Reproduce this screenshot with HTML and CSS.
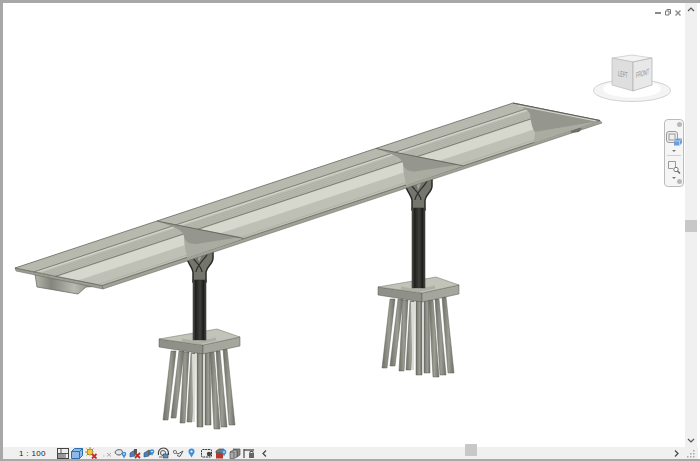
FILE: index.html
```html
<!DOCTYPE html>
<html lang="en">
<head>
<meta charset="utf-8">
<title>Bridge view</title>
<link rel="stylesheet" href="styles.css">
</head>
<body>
<div class="window">
  <div class="main">
    <div class="canvas">
      <svg class="scene" viewBox="3 3 682 444" width="682" height="444" aria-label="Bridge model">
        <defs>
          <linearGradient id="col" x1="0" x2="1" y1="0" y2="0">
            <stop offset="0" stop-color="#55564f"/><stop offset=".2" stop-color="#1f201e"/>
            <stop offset=".55" stop-color="#3f403c"/><stop offset=".8" stop-color="#1c1d1b"/><stop offset="1" stop-color="#4a4b46"/>
          </linearGradient>
          <linearGradient id="pile" x1="0" x2="1" y1="0" y2="0">
            <stop offset="0" stop-color="#6e6f66"/><stop offset=".55" stop-color="#9c9d93"/><stop offset="1" stop-color="#6e6f66"/>
          </linearGradient>
          <linearGradient id="box" x1="0" x2="1" y1="0" y2="0">
            <stop offset="0" stop-color="#b3b4aa"/><stop offset=".25" stop-color="#84857c"/><stop offset=".6" stop-color="#b9bab0"/><stop offset="1" stop-color="#77786f"/>
          </linearGradient>
          <g id="head">
            <path d="M185 252C186 262 192 266 193 272V282H206V272C207 266 213 264 213 258V248Z" fill="#74756d" stroke="#2a2b28" stroke-width="1.500"/>
            <path d="M190 253C192 260 201 264 202 272M209 251C206 259 197 264 196 272" fill="none" stroke="#2f302d" stroke-width="1.200"/>
            <path d="M197 254L199 262L203 253Z" fill="#a3a49a"/>
          </g>
          <g id="found">
            <g fill="url(#pile)" stroke="#5f605a" stroke-width=".5">
              <path d="M171 351L176 351L168 420L163 420Z"/>
              <path d="M179 351L184 351L176 418L171 418Z"/>
              <path d="M184 352L189 352L185 423L180 423Z"/>
              <path d="M191 353L195 353L192 422L187 422Z"/>
              <path d="M197 352L203 352L203 427L197 427Z"/>
              <path d="M205 352L210 352L211 425L205 425Z"/>
              <path d="M210 352L214 352L220 429L214 429Z"/>
              <path d="M216 351L220 351L227 427L221 427Z"/>
              <path d="M223 349L227 349L235 425L229 425Z"/>
            </g>
            <path d="M192 354L196 354L195 422L193 422Z" fill="#dcdcd6"/>
            <path d="M159 339V347L203 354V345Z" fill="#8f9087" stroke="#55564f" stroke-width=".5"/>
            <path d="M240 337V346L203 354V345Z" fill="#a5a69c" stroke="#55564f" stroke-width=".5"/>
            <path d="M159 339L217 329L240 337L203 345Z" fill="#c2c3b9" stroke="#6d6e67" stroke-width=".5"/>
            <path d="M182 340L198 343L216 339" fill="none" stroke="#a6a79d" stroke-width="3" opacity=".7"/>
          </g>
          <g id="patch">
            <path d="M157 221C170 226 182 228 184 236C184 245 186 250 187 258L244 238.500Z" fill="#aaaba1"/>
            <path d="M157 221C170 226 182 228 184 236C185 241 188 244 196 244L241 237Z" fill="#95968d"/>
            <path d="M157 221L244 238.500" stroke="#5f605a" stroke-width=".8" fill="none"/>
          </g>
        </defs>

        <path d="M35 274L37 287L78 294L86 287L100 286L96 282Z" fill="url(#box)" stroke="#5f605a" stroke-width=".7"/>

        <use href="#head"/>
        <use href="#head" transform="translate(219 -72)"/>
        <use href="#found"/>
        <use href="#found" transform="translate(219 -52)"/>
        <rect class="column" x="193" y="280" width="13" height="60"/>
        <rect class="column" x="412" y="208" width="13" height="80"/>

        <path d="M102 285.500L600 120.500L602 123L103 289Z" fill="#a0a197" stroke="#5f605a" stroke-width=".5"/>
        <path d="M15 268L102 285.500L103 289L16 271Z" fill="#9c9d93" stroke="#5f605a" stroke-width=".5"/>
        <path d="M570 128L582 128L579 132L571 133Z" fill="#6f706a"/>

        <g transform="matrix(.498 -.165 .87 .175 15 268)">
          <rect x="0" y="0" width="1000" height="100" fill="#bfc0b5"/>
          <rect x="0" y="0" width="1000" height="22" fill="#b8b9ae"/>
          <rect x="0" y="22" width="1000" height="5" fill="#d0d1c6"/>
          <rect x="0" y="27" width="1000" height="20" fill="#babbb0"/>
          <rect x="0" y="49" width="1000" height="23" fill="#d7d8cd"/>
          <g class="deckline">
            <path d="M0 22H1000"/><path d="M0 47H1000"/>
            <path d="M0 0H1000"/><path d="M0 100H1000"/><path d="M0 0V100"/><path d="M1000 0V100"/>
          </g>
          <g class="deckline thin">
            <path d="M0 31H1000"/><path d="M0 35H1000"/><path d="M0 39H1000"/><path d="M0 43H1000"/><path d="M0 95H1000"/>
          </g>
        </g>

        <use href="#patch"/>
        <use href="#patch" transform="translate(219 -72.600)"/>
        <path d="M535 132L534 143L600 121Z" fill="#aaaba1"/>
        <path d="M513 103C522 106 528 110 530 114C531 122 532 128 535 132L600 121Z" fill="#95968d"/>
        <path d="M513 103L600 120.500" stroke="#5f605a" stroke-width="1" fill="none"/>
        <path d="M518 105.500L596 121" stroke="#d6d7ce" stroke-width="1" fill="none"/>
      </svg>

      <div class="winctl">
        <svg width="6" height="5" viewBox="0 0 6 5"><rect y="2" width="6" height="2" fill="#8a8a8a"/></svg>
        <svg width="6" height="7" viewBox="0 0 6 7"><path d="M1.500 .5H5.500V5M.5 2H4V6H.5Z" fill="none" stroke="#777"/></svg>
        <svg width="6" height="6" viewBox="0 0 6 6"><path d="M.5 .5L5.500 5.500M5.500 .5L.5 5.500" stroke="#8a8a8a" stroke-width="1.400"/></svg>
      </div>

      <svg class="cube" viewBox="590 50 84 56" width="84" height="56" aria-label="View cube">
        <ellipse cx="632" cy="90.500" rx="38.500" ry="11" fill="#f4f4f4" stroke="#d2d2d2"/>
        <ellipse cx="632" cy="89" rx="29" ry="8.500" fill="#fff"/>
        <path d="M612 58L632 55L652 58L633 62Z" fill="#f4f4f4" stroke="#c4c4c4" stroke-width=".7"/>
        <path d="M612 58L633 62V91L612 85Z" fill="#dedede" stroke="#bababa" stroke-width=".7"/>
        <path d="M652 58L633 62V91L652 85Z" fill="#e8e8e8" stroke="#adadad" stroke-width=".7"/>
        <text class="cubetext" transform="matrix(.5 .1 0 1 618 76)">LEFT</text>
        <text class="cubetext" transform="matrix(.47 -.14 0 1 636 78)">FRONT</text>
      </svg>

      <div class="navbar">
        <span class="pin"></span>
        <svg width="18" height="17" viewBox="0 0 18 17"><rect x="1.500" y="1.500" width="11" height="11" rx="2.500" fill="#eee" stroke="#9a9a9a"/><rect x="4" y="4" width="6" height="6" fill="none" stroke="#9a9a9a"/><path d="M9 11L11.500 8.500H17V13L14.500 15.500H9Z" fill="#6a9fd8"/><path d="M9 11H14.500V15.500M14.500 11L17 8.500" fill="none" stroke="#cfe2f5" stroke-width=".7"/></svg>
        <span class="caret"></span>
        <span class="divider"></span>
        <svg width="14" height="14" viewBox="0 0 14 14"><path d="M1.500 1.500H8.500V7M1.500 1.500V8.500H6" fill="none" stroke="#999"/><circle cx="9" cy="9.500" r="2.200" fill="#fff" stroke="#777"/><path d="M10.500 11L13 13.500" stroke="#666" stroke-width="1.400"/></svg>
        <span class="caret"></span>
        <span class="pin"></span>
      </div>
    </div>

    <div class="vscroll">
      <svg width="8" height="5" viewBox="0 0 8 5"><path d="M1 4L4 1L7 4" fill="none" stroke="#555" stroke-width="1.200"/></svg>
      <span class="vthumb"></span>
      <svg width="8" height="5" viewBox="0 0 8 5"><path d="M1 1L4 4L7 1" fill="none" stroke="#555" stroke-width="1.200"/></svg>
    </div>
  </div>

  <div class="status">
    <span class="scale">1 : 100</span>
    <div class="tools">
      <svg width="12" height="11" viewBox="0 0 12 11"><rect x=".5" y=".5" width="11" height="10" fill="#eee" stroke="#444"/><path d="M.5 5.500H11.500M4 1V5M8 6V10" stroke="#555"/><rect x="1" y="6" width="6" height="4" fill="#999"/></svg>
      <svg width="12" height="11" viewBox="0 0 12 11"><path d="M.5 3.500L3.500 .5H11.500V7.500L8.500 10.500H.5Z" fill="#8db9e4" stroke="#2f6ea8"/><path d="M.5 3.500H8.500V10.500M8.500 3.500L11.500 .5" fill="none" stroke="#2f6ea8"/></svg>
      <svg width="12" height="12" viewBox="0 0 12 12"><circle cx="5" cy="5" r="3" fill="#f2c544" stroke="#8a6d10" stroke-width=".7"/><path d="M5 0V2M0 5H2M1.500 1.500L3 3M8.500 1.500L7 3M1.500 8.500L3 7" stroke="#b8911c"/><path d="M7 7L11.500 11.500M11.500 7L7 11.500" stroke="#c8281e" stroke-width="1.800"/></svg>
      <svg class="t-faint" width="10" height="8" viewBox="0 0 10 8"><path d="M5 4L9 7.500M9 4L5 7.500" stroke="#aaa"/><path d="M1 7H2.500" stroke="#bbb"/></svg>
      <svg width="13" height="11" viewBox="0 0 13 11"><path d="M1 4C2 1.500 6 1 8 2.500C9 4 8 7 5 7C3 7 1.500 6 1 4Z" fill="#e6e6e6" stroke="#555"/><circle cx="10" cy="6" r="2.300" fill="#3f8fd8"/><path d="M8.500 7.500L10 10.500L11.500 7.500Z" fill="#3f8fd8"/><circle cx="10" cy="6" r=".8" fill="#fff"/></svg>
      <svg width="12" height="11" viewBox="0 0 12 11"><path d="M1 5L6 2V8L1 9Z" fill="#4a7fb8" stroke="#27527d" stroke-width=".6"/><rect x="5" y="1" width="3" height="4" fill="#555"/><path d="M6 5L11 10M11 5L6 10" stroke="#c8281e" stroke-width="1.800"/></svg>
      <svg width="12" height="11" viewBox="0 0 12 11"><path d="M1 5L6 2V8L1 9Z" fill="#4a7fb8" stroke="#27527d" stroke-width=".6"/><rect x="5" y="2" width="3" height="5" fill="#666"/><circle cx="9" cy="3.500" r="2.300" fill="#3f8fd8"/><path d="M7.500 5L9 8L10.500 5Z" fill="#3f8fd8"/><circle cx="9" cy="3.500" r=".8" fill="#fff"/></svg>
      <svg width="13" height="12" viewBox="0 0 13 12"><path d="M1.500 8C.5 4 3 1 6.500 1S12 4 11.500 8" fill="none" stroke="#444" stroke-width="1.200"/><circle cx="6" cy="6" r="2.500" fill="none" stroke="#555"/><rect x="6" y="7" width="5" height="4" fill="#5a8fc4" stroke="#333" stroke-width=".5"/><path d="M2 10H5" stroke="#666"/></svg>
      <svg width="12" height="9" viewBox="0 0 12 9"><path d="M1 2L6 5L11 2L8 7.500L5 6.500" fill="none" stroke="#555"/><circle cx="3" cy="3" r="1.600" fill="#eee" stroke="#555" stroke-width=".7"/></svg>
      <svg class="t-pin" width="7" height="10" viewBox="0 0 7 10"><circle cx="3.500" cy="3.500" r="3" fill="#3f8fd8"/><path d="M1.200 5.500L3.500 9.500L5.800 5.500Z" fill="#3f8fd8"/><circle cx="3.500" cy="3.500" r="1.100" fill="#fff"/></svg>
      <svg width="12" height="10" viewBox="0 0 12 10"><rect x=".5" y="1.500" width="10" height="7.500" rx="1" fill="#eee" stroke="#333" stroke-dasharray="2 .7"/><circle cx="8" cy="6" r="2.200" fill="#444"/></svg>
      <svg width="12" height="11" viewBox="0 0 12 11"><path d="M1 3L4 1H9V5H1Z" fill="#777" stroke="#444" stroke-width=".6"/><rect x="1" y="5" width="7" height="5.500" fill="#b33a30"/><circle cx="9" cy="4" r="2.400" fill="#3f8fd8"/><path d="M7.500 5.500L9 8.500L10.500 5.500Z" fill="#3f8fd8"/><circle cx="9" cy="4" r=".8" fill="#fff"/></svg>
      <svg width="12" height="11" viewBox="0 0 12 11"><path d="M4 1L11 1V7L8 9V3Z" fill="#888" stroke="#444" stroke-width=".6"/><path d="M1 4L4 2H8V9L5 10.500H1Z" fill="#aaa" stroke="#444" stroke-width=".6"/><path d="M1 4H5V10" fill="none" stroke="#444" stroke-width=".6"/></svg>
      <svg width="12" height="11" viewBox="0 0 12 11"><path d="M1 1V10" stroke="#555" stroke-width="1.300"/><path d="M1 2H11" stroke="#444" stroke-width="1.300"/><rect x="6" y="5" width="5" height="5" fill="#666"/><path d="M7 5V3.500H10V5" fill="none" stroke="#555"/></svg>
      <svg class="t-chev" width="5" height="7" viewBox="0 0 5 7"><path d="M4 .5L1 3.500L4 6.500" fill="none" stroke="#444" stroke-width="1.200"/></svg>
    </div>
    <div class="hscroll">
      <span class="hthumb"></span>
      <svg width="5" height="7" viewBox="0 0 5 7"><path d="M1 .5L4 3.500L1 6.500" fill="none" stroke="#444" stroke-width="1.200"/></svg>
    </div>
    <svg class="grip" width="8" height="8" viewBox="0 0 8 8"><path d="M6 0h1.500v1.500H6zM6 3h1.500v1.500H6zM3 3h1.500v1.500H3zM6 6h1.500v1.500H6zM3 6h1.500v1.500H3zM0 6h1.500v1.500H0z" fill="#aaa"/></svg>
  </div>
</div>
</body>
</html>
```
FILE: styles.css
```css
* { box-sizing: border-box; }
html, body { margin: 0; padding: 0; }
body { width: 700px; height: 461px; background: #fff; overflow: hidden; font-family: "Liberation Sans", Arial, sans-serif; }
.window { width: 700px; height: 461px; display: flex; flex-direction: column; border-top: 3px solid #a8a8a8; border-left: 3px solid #a8a8a8; border-bottom: 2px solid #a8a8a8; padding-right: 3px; background: #fff; }
.main { flex: 1; display: flex; min-height: 0; }
.canvas { position: relative; width: 682px; height: 444px; background: #fff; }
.scene { display: block; }
.column { fill: url(#col); stroke: #2a2b28; stroke-width: .5; }
.deckline path { stroke: #5f605a; stroke-width: .7px; vector-effect: non-scaling-stroke; fill: none; }
.deckline.thin path { stroke: #a3a499; stroke-width: .5px; }
.cubetext { font-size: 8px; fill: #8d8d8d; font-family: "Liberation Sans", Arial, sans-serif; }
.winctl { position: absolute; top: 6px; right: 4px; display: flex; align-items: center; gap: 4px; }
.cube { position: absolute; left: 587px; top: 47px; }
.navbar { position: absolute; left: 661px; top: 116px; width: 20px; height: 68px; border: 1px solid #bcbcbc; border-radius: 4px; background: #f5f5f5; display: flex; flex-direction: column; align-items: center; padding-top: 2px; }
.navbar svg { flex: none; }
.navbar svg:nth-of-type(1) { margin-top: 3px; }
.navbar svg:nth-of-type(2) { margin-top: 4px; }
.pin { width: 5px; height: 5px; border-radius: 50%; background: #b8b8b8; margin-left: 10px; flex: none; }
.navbar .pin:last-child { margin-top: auto; margin-bottom: 2px; }
.caret { width: 0; height: 0; border-left: 2px solid transparent; border-right: 2px solid transparent; border-top: 2px solid #777; margin-top: 3px; flex: none; }
.divider { width: 14px; height: 1px; background: #cfcfcf; margin-top: 3px; flex: none; }
.vscroll { width: 12px; background: #f0f0f0; display: flex; flex-direction: column; align-items: center; justify-content: space-between; padding: 4px 0; position: relative; }
.vthumb { position: absolute; left: 0; top: 217px; width: 12px; height: 12px; background: #c8c8c8; }
.status { height: 12px; flex: none; display: flex; align-items: center; background: #f0f0f0; margin-right: -1px; }
.scale { width: 54px; padding-left: 16px; font-size: 8px; letter-spacing: .35px; color: #222; flex: none; white-space: nowrap; }
.tools { display: flex; align-items: center; gap: 2px; flex: none; }
.tools svg { flex: none; }
.tools .t-faint { margin-left: 3px; }
.tools .t-pin { margin-left: 2px; margin-right: 4px; }
.tools .t-chev { margin-left: 5px; }
.hscroll { flex: 1; position: relative; display: flex; align-items: center; justify-content: flex-end; padding-right: 8px; }
.hthumb { position: absolute; left: 198px; top: -6px; width: 12px; height: 12px; background: #c8c8c8; }
.grip { flex: none; margin-right: 3px; margin-top: 2px; }
```
